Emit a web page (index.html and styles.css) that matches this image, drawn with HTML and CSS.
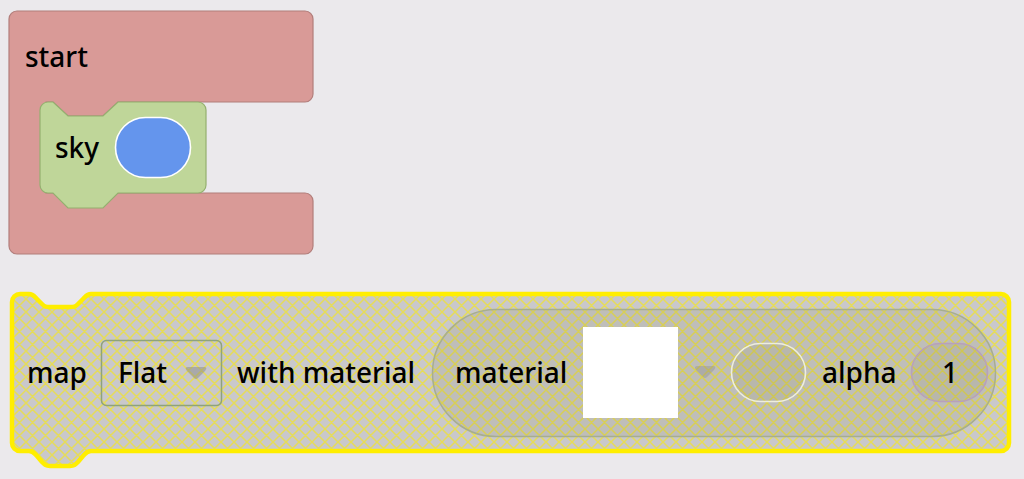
FILE: index.html
```html
<!DOCTYPE html>
<html lang="en">
<head>
<meta charset="utf-8">
<title>Blocks</title>
<link rel="stylesheet" href="styles.css">
</head>
<body>
<div class="workspace">
<svg class="canvas" width="1024" height="479" viewBox="0 0 1024 479" xmlns="http://www.w3.org/2000/svg">
  <defs>
    <pattern id="hatch" patternUnits="userSpaceOnUse" width="13" height="13">
      <rect width="13" height="13" class="hatch-bg"/>
      <path class="hatch-line" d="M-2,2 L2,-2 M0,13 L13,0 M11,15 L15,11 M-2,11 L2,15 M0,0 L13,13 M11,-2 L15,2"/>
    </pattern>
  </defs>

  <!-- start block -->
  <path class="blk-red" d="M9,19 a8,8 0 0 1 8,-8 H305 a8,8 0 0 1 8,8 V94 a8,8 0 0 1 -8,8 H118 L103,116 H68 L53,102 H46 V193 H305 a8,8 0 0 1 8,8 V246 a8,8 0 0 1 -8,8 H17 a8,8 0 0 1 -8,-8 Z"/>
  <text class="lbl" x="25" y="67">start</text>

  <!-- sky block -->
  <path class="blk-green" d="M40,110 a8,8 0 0 1 8,-8 H53 L68,116 H103 L118,102 H198 a8,8 0 0 1 8,8 V185 a8,8 0 0 1 -8,8 H118 L103,208 H68 L53,193 H48 a8,8 0 0 1 -8,-8 Z"/>
  <text class="lbl" x="55" y="158">sky</text>
  <rect class="colour-blue" x="115.5" y="117.5" width="75" height="60" rx="30"/>

  <!-- map block -->
  <path class="blk-map" d="M12,302 a8,8 0 0 1 8,-8 H29 C33,294 34,296 37,299 L42,304 C45,307 46,307 50,307 H70 C74,307 75,307 78,304 L83,299 C86,296 87,294 91,294 H1001 a8,8 0 0 1 8,8 V443 a8,8 0 0 1 -8,8 H91 C87,451 86,453 83,456 L78,462 C75,465 74,466 70,466 H50 C46,466 45,465 42,462 L37,456 C34,453 33,451 29,451 H20 a8,8 0 0 1 -8,-8 Z"/>
  <text class="lbl" x="27" y="383">map</text>

  <rect class="dropdown" x="101.5" y="340.5" width="120" height="65" rx="5"/>
  <text class="lbl" x="118" y="383">Flat</text>
  <path class="arrow" d="M188,367 H204 Q208,367 205,371 L198,378 Q196,380 194,378 L187,371 Q184,367 188,367 Z"/>

  <text class="lbl" x="237" y="383">with material</text>

  <rect class="pill" x="432.5" y="309.5" width="563" height="127" rx="63.5"/>
  <text class="lbl" x="455" y="383">material</text>
  <rect class="swatch" x="583" y="327" width="95" height="91"/>
  <path class="arrow2" d="M698,366 H713 Q717,366 714,370 L707,377 Q705,379 703,377 L696,370 Q693,366 698,366 Z"/>
  <rect class="slot-empty" x="731.5" y="343.5" width="74" height="58" rx="29"/>
  <text class="lbl" x="822" y="383">alpha</text>
  <rect class="slot-num" x="911.5" y="343.5" width="76" height="58" rx="29"/>
  <text class="lbl num" x="950" y="383">1</text>
</svg>
</div>
</body>
</html>
```
FILE: styles.css
```css
html, body {
  margin: 0;
  padding: 0;
  background: #ebe9ec;
}
.workspace {
  width: 1024px;
  height: 479px;
  overflow: hidden;
}
.canvas {
  display: block;
}
.hatch-bg {
  fill: #c9c8cb;
}
.hatch-line {
  stroke: #e6dc58;
  stroke-width: 1.5;
  fill: none;
}
.blk-red {
  fill: #d99a97;
  stroke: #b27e7b;
  stroke-width: 1.2;
}
.blk-green {
  fill: #bfd699;
  stroke: #94b06f;
  stroke-width: 1.2;
}
.colour-blue {
  fill: #6495ed;
  stroke: #ffffff;
  stroke-width: 1.6;
}
.blk-map {
  fill: url(#hatch);
  stroke: #ffee00;
  stroke-width: 4.5;
}
.lbl {
  font-family: "Noto Sans", "Open Sans", sans-serif;
  font-size: 28px;
  font-weight: 500;
  fill: #000000;
}
.num {
  text-anchor: middle;
}
.dropdown {
  fill: none;
  stroke: #8ea37a;
  stroke-width: 1.5;
}
.arrow {
  fill: rgba(130, 130, 130, 0.45);
}
.arrow2 {
  fill: rgba(130, 130, 130, 0.3);
}
.pill {
  fill: rgba(120, 125, 70, 0.13);
  stroke: #a7ae8e;
  stroke-width: 1.5;
}
.swatch {
  fill: #ffffff;
}
.slot-empty {
  fill: rgba(140, 140, 80, 0.12);
  stroke: #eeeedd;
  stroke-width: 1.6;
}
.slot-num {
  fill: rgba(140, 140, 80, 0.12);
  stroke: #b8a0bb;
  stroke-width: 1.6;
}
```
